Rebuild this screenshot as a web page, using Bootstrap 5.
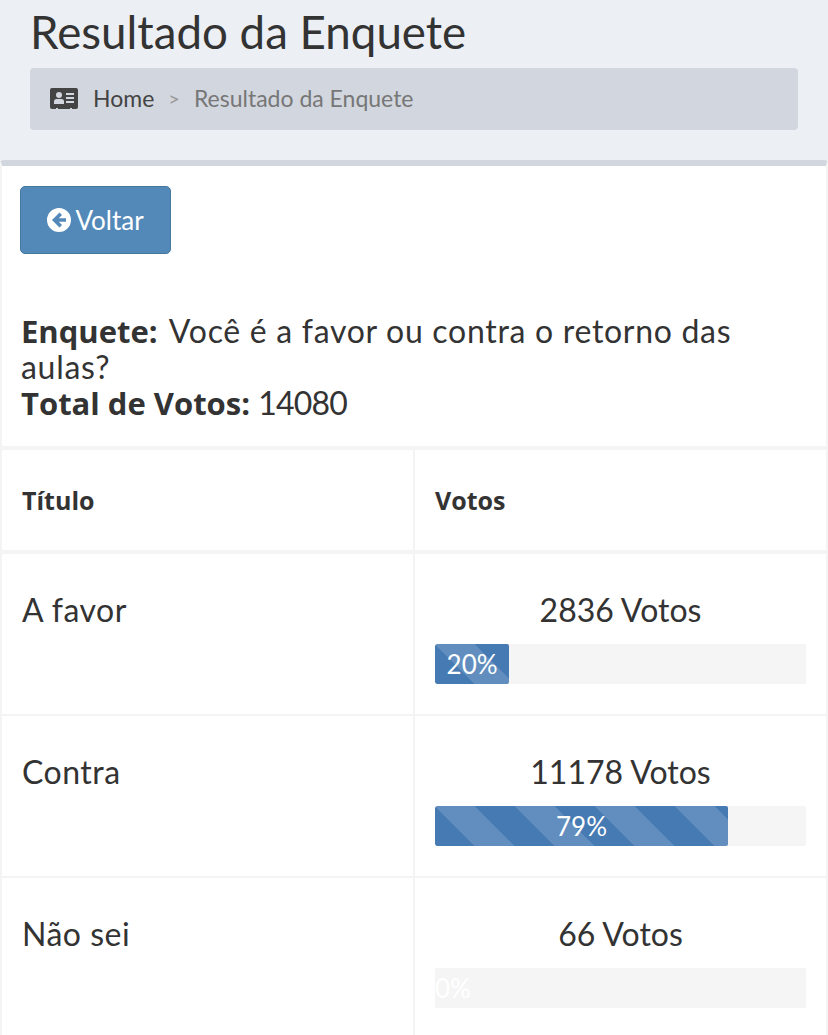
<!DOCTYPE html>
<html lang="en">
  <head>
    <meta charset="UTF-8" />
    <title>Resultado da Enquete</title>
    <link href="https://cdn.jsdelivr.net/npm/bootstrap@5.3.2/dist/css/bootstrap.min.css" rel="stylesheet" />
    <style>
      body {
        background: #ecf0f5;
        color: #333;
        font-family: "Lato", "Liberation Sans", sans-serif;
        font-size: 32px;
        line-height: 36px;
        overflow: hidden;
      }
      .page-head {
        height: 160px;
        padding: 0 30px;
      }
      .page-head h1 {
        font-size: 45.7px;
        font-weight: 400;
        line-height: 64px;
        margin: 0 0 4px;
      }
      .crumb-bar {
        height: 62px;
        background: #d2d6de;
        border-radius: 4px;
        padding: 0 20px 3px;
        font-size: 23px;
        color: #777;
      }
      .crumb-icon { margin: 3px 15px 0 0; }
      .crumb-home { color: #444; }
      .crumb-sep { color: #999; font-size: 20px; margin: 0 14px; }
      .result-box {
        background: #fff;
        border-top: 6px solid #d2d6de;
        border-left: 2px solid #f4f4f4;
        border-right: 2px solid #f4f4f4;
        border-radius: 4px 4px 0 0;
        min-height: 875px;
      }
      .back-wrap { padding: 20px 0 0 18px; }
      .back-btn {
        width: 151px;
        height: 68px;
        background: #5389b9;
        border: 1px solid #44789f;
        border-radius: 5px;
        color: #fff;
        font-size: 26px;
        padding: 0;
      }
      .poll-info { padding: 59px 20px 25px 19px; }
      .poll-info b {
        display: inline-block;
        font-family: "Open Sans", "Liberation Sans", sans-serif;
        font-size: 31px;
        font-weight: 700;
        line-height: 36px;
      }
      .poll-question { display: inline-block; letter-spacing: .7px; }
      .poll-question-first { margin-left: 3px; }
      .poll-total { display: inline-block; letter-spacing: -.8px; }
      .poll-table {
        width: 100%;
        table-layout: fixed;
        border-collapse: separate;
        border-spacing: 0;
        border-top: 4px solid #f4f4f4;
      }
      .poll-table td, .poll-table th {
        border-bottom: 2px solid #f4f4f4;
        padding: 0 20px;
        vertical-align: top;
      }
      .poll-table tr > :first-child { width: 411px; }
      .poll-table td:first-child { letter-spacing: .5px; }
      .poll-table tr > :last-child { border-left: 2px solid #f4f4f4; }
      .poll-table th {
        height: 104px;
        border-bottom-width: 4px;
        font-family: "Open Sans", "Liberation Sans", sans-serif;
        font-size: 25px;
        vertical-align: middle;
      }
      .poll-table td { height: 162px; padding-top: 38px; }
      .vote-count { text-align: center; margin-bottom: 16px; }
      .vote-track {
        height: 40px;
        background: #f5f5f5;
        border-radius: 2px;
        color: #fff;
        font-size: 26px;
        line-height: 40px;
        overflow: hidden;
        white-space: nowrap;
      }
      .vote-fill {
        height: 100%;
        text-align: center;
        background-color: #457ab3;
        background-image: linear-gradient(45deg, rgba(255,255,255,.15) 25%, transparent 25%, transparent 50%, rgba(255,255,255,.15) 50%, rgba(255,255,255,.15) 75%, transparent 75%, transparent);
        background-size: 80px 80px;
        border-radius: 2px;
      }
    </style>
  </head>
  <body>
    <div class="page-head">
      <h1>Resultado da Enquete</h1>
      <div class="crumb-bar d-flex align-items-center">
        <svg width="28" height="22" viewBox="0 0 28 22" class="crumb-icon"><path fill="#444" fill-rule="evenodd" d="M2 0h24a2 2 0 0 1 2 2v17a2 2 0 0 1-2 2h-4v-1h-2v1H8v-1H6v1H2a2 2 0 0 1-2-2V2a2 2 0 0 1 2-2zM9 4a3 3 0 1 0 0 6 3 3 0 0 0 0-6zM4 16h10v-2.500a2.500 2.500 0 0 0-2.500-2.500h-5A2.500 2.500 0 0 0 4 13.500zM16 5v2h8V5zM16 9v2h8V9zM16 13v2h8v-2z"/></svg>
        <span class="crumb-home">Home</span><span class="crumb-sep">&gt;</span><span>Resultado da Enquete</span>
      </div>
    </div>
    <div class="result-box">
      <div class="back-wrap">
        <button class="back-btn d-flex align-items-center justify-content-center gap-1" type="button">
          <svg width="24" height="24" viewBox="0 0 24 24"><path fill="#fff" fill-rule="evenodd" d="M12 0a12 12 0 1 1 0 24 12 12 0 0 1 0-24zM12.500 4.500 5 12l7.500 7.500 2.500-2.500-3.200-3.200H19v-3.600h-7.200L15 7z"/></svg>
          Voltar
        </button>
      </div>
      <div class="poll-info">
        <b>Enquete:</b> <span class="poll-question poll-question-first">Você é a favor ou contra o retorno das</span><br />
        <span class="poll-question">aulas?</span><br />
        <b>Total de Votos:</b> <span class="poll-total">14080</span>
      </div>
      <table class="poll-table">
        <tr><th>Título</th><th>Votos</th></tr>
        <tr>
          <td>A favor</td>
          <td>
            <div class="vote-count">2836 Votos</div>
            <div class="vote-track"><div class="vote-fill" style="width: 20%">20%</div></div>
          </td>
        </tr>
        <tr>
          <td>Contra</td>
          <td>
            <div class="vote-count">11178 Votos</div>
            <div class="vote-track"><div class="vote-fill" style="width: 79%">79%</div></div>
          </td>
        </tr>
        <tr>
          <td>Não sei</td>
          <td>
            <div class="vote-count">66 Votos</div>
            <div class="vote-track"><div class="vote-fill" style="width: 0%">0%</div></div>
          </td>
        </tr>
      </table>
    </div>
    <script src="https://cdn.jsdelivr.net/npm/bootstrap@5.3.2/dist/js/bootstrap.bundle.min.js"></script>
  </body>
</html>
